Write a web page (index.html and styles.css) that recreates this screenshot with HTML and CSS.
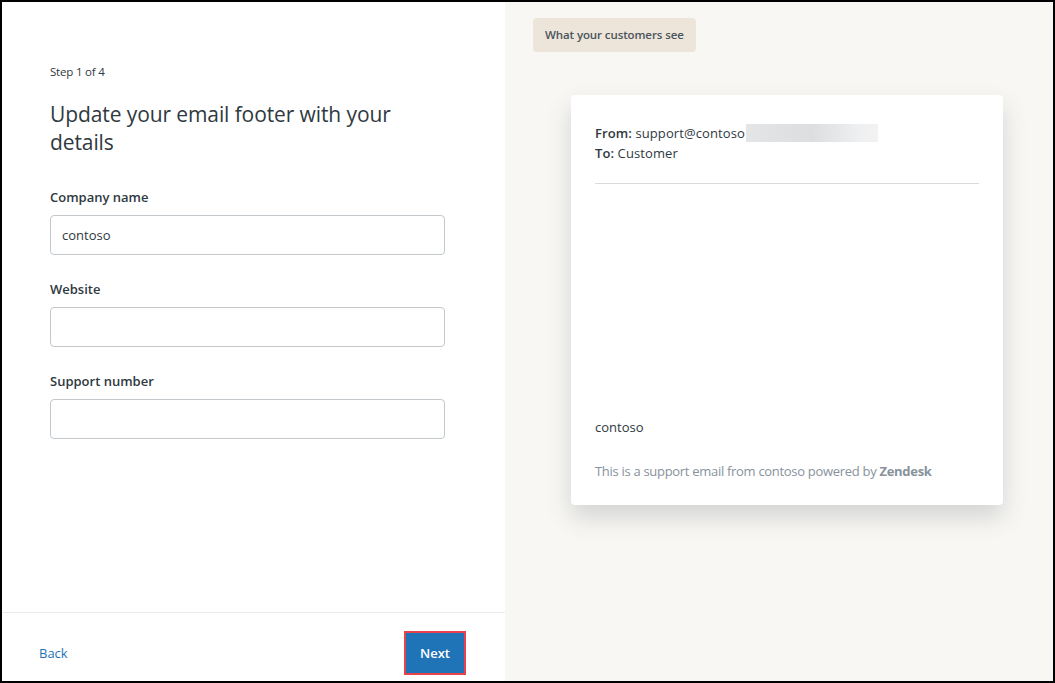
FILE: index.html
```html
<!DOCTYPE html>
<html>
<head>
<meta charset="utf-8">
<link rel="stylesheet" href="styles.css">
</head>
<body>
<div class="frame">
  <section class="left">
    <div class="form">
      <div class="step">Step 1 of 4</div>
      <h1 class="title">Update your email footer with your details</h1>
      <div class="field">
        <label class="label">Company name</label>
        <div class="input">contoso</div>
      </div>
      <div class="field">
        <label class="label">Website</label>
        <div class="input"></div>
      </div>
      <div class="field">
        <label class="label">Support number</label>
        <div class="input"></div>
      </div>
    </div>
    <div class="footer">
      <span class="back">Back</span>
      <span class="next-wrap"><span class="next">Next</span></span>
    </div>
  </section>
  <section class="right">
    <div class="badge">What your customers see</div>
    <div class="card">
      <div class="meta">
        <div><b>From:</b> support@contoso<span class="blur"></span></div>
        <div><b>To:</b> Customer</div>
      </div>
      <div class="divider"></div>
      <div class="spacer"></div>
      <div class="sig">contoso</div>
      <div class="powered">This is a support email from contoso powered by <b>Zendesk</b></div>
    </div>
  </section>
</div>
</body>
</html>
```
FILE: styles.css
```css
* { box-sizing: border-box; }
html, body { margin: 0; padding: 0; }
body {
  font-family: "Open Sans", "Noto Sans", sans-serif;
  color: #2f3941;
  background: #000;
}
.frame {
  width: 1055px;
  height: 683px;
  border: 2px solid #000;
  display: flex;
  background: #f8f7f4;
}
.left {
  width: 503px;
  background: #fff;
  display: flex;
  flex-direction: column;
}
.form {
  flex: 1;
  padding: 62px 60px 0 48px;
}
.step {
  font-size: 11.5px;
  line-height: 16px;
  color: #2f3941;
  letter-spacing: -0.2px;
}
.title {
  margin: 20px 0 0;
  font-size: 21px;
  font-weight: 400;
  line-height: 28px;
  color: #2f3941;
  width: 360px;
  letter-spacing: -0.1px;
}
.field { margin-top: 31px; }
.field + .field { margin-top: 24px; }
.label {
  display: block;
  font-size: 13px;
  font-weight: 600;
  line-height: 20px;
  color: #2f3941;
}
.input {
  margin-top: 8px;
  width: 395px;
  height: 40px;
  border: 1px solid #c2c8cc;
  border-radius: 4px;
  padding: 0 11px;
  font-size: 13px;
  line-height: 38px;
  color: #2f3941;
}
.footer {
  height: 69px;
  border-top: 1px solid #e9ebed;
  display: flex;
  align-items: flex-start;
  justify-content: space-between;
  padding: 18px 39px 0 37px;
}
.back {
  font-size: 13px;
  line-height: 44px;
  color: #1f73b7;
}
.next-wrap {
  border: 2px solid #e8424a;
  display: flex;
}
.next {
  display: block;
  width: 58px;
  height: 40px;
  background: #1f73b7;
  color: #fff;
  font-size: 13px;
  font-weight: 600;
  line-height: 40px;
  text-align: center;
}
.right {
  flex: 1;
  padding: 16px 28px;
  display: flex;
  flex-direction: column;
  align-items: flex-start;
}
.badge {
  background: #ede5d9;
  border-radius: 4px;
  height: 34px;
  padding: 0 12px;
  font-size: 11.5px;
  font-weight: 600;
  line-height: 34px;
  color: #49545c;
  letter-spacing: -0.1px;
}
.card {
  margin: 43px 0 0 38px;
  width: 432px;
  height: 410px;
  background: #fff;
  border-radius: 4px;
  box-shadow: 0 12px 24px rgba(47, 57, 65, 0.18);
  padding: 28px 24px 24px;
  display: flex;
  flex-direction: column;
}
.meta {
  font-size: 13px;
  line-height: 20px;
  color: #2f3941;
  letter-spacing: 0.1px;
}
.meta b { font-weight: 600; }
.blur {
  display: inline-block;
  width: 132px;
  height: 18px;
  vertical-align: -4px;
  margin-left: 1px;
  background: linear-gradient(90deg, #e4e5e7 0%, #dcdee0 50%, #eeeff0 85%, #f2f2f3 100%);
}
.divider {
  margin-top: 20px;
  height: 1px;
  background: #d8dcde;
}
.spacer { flex: 1; }
.sig {
  font-size: 13px;
  line-height: 20px;
  color: #2f3941;
}
.powered {
  margin-top: 24px;
  font-size: 13px;
  line-height: 20px;
  color: #87929d;
  letter-spacing: -0.3px;
}
.powered b { font-weight: 700; }
```
